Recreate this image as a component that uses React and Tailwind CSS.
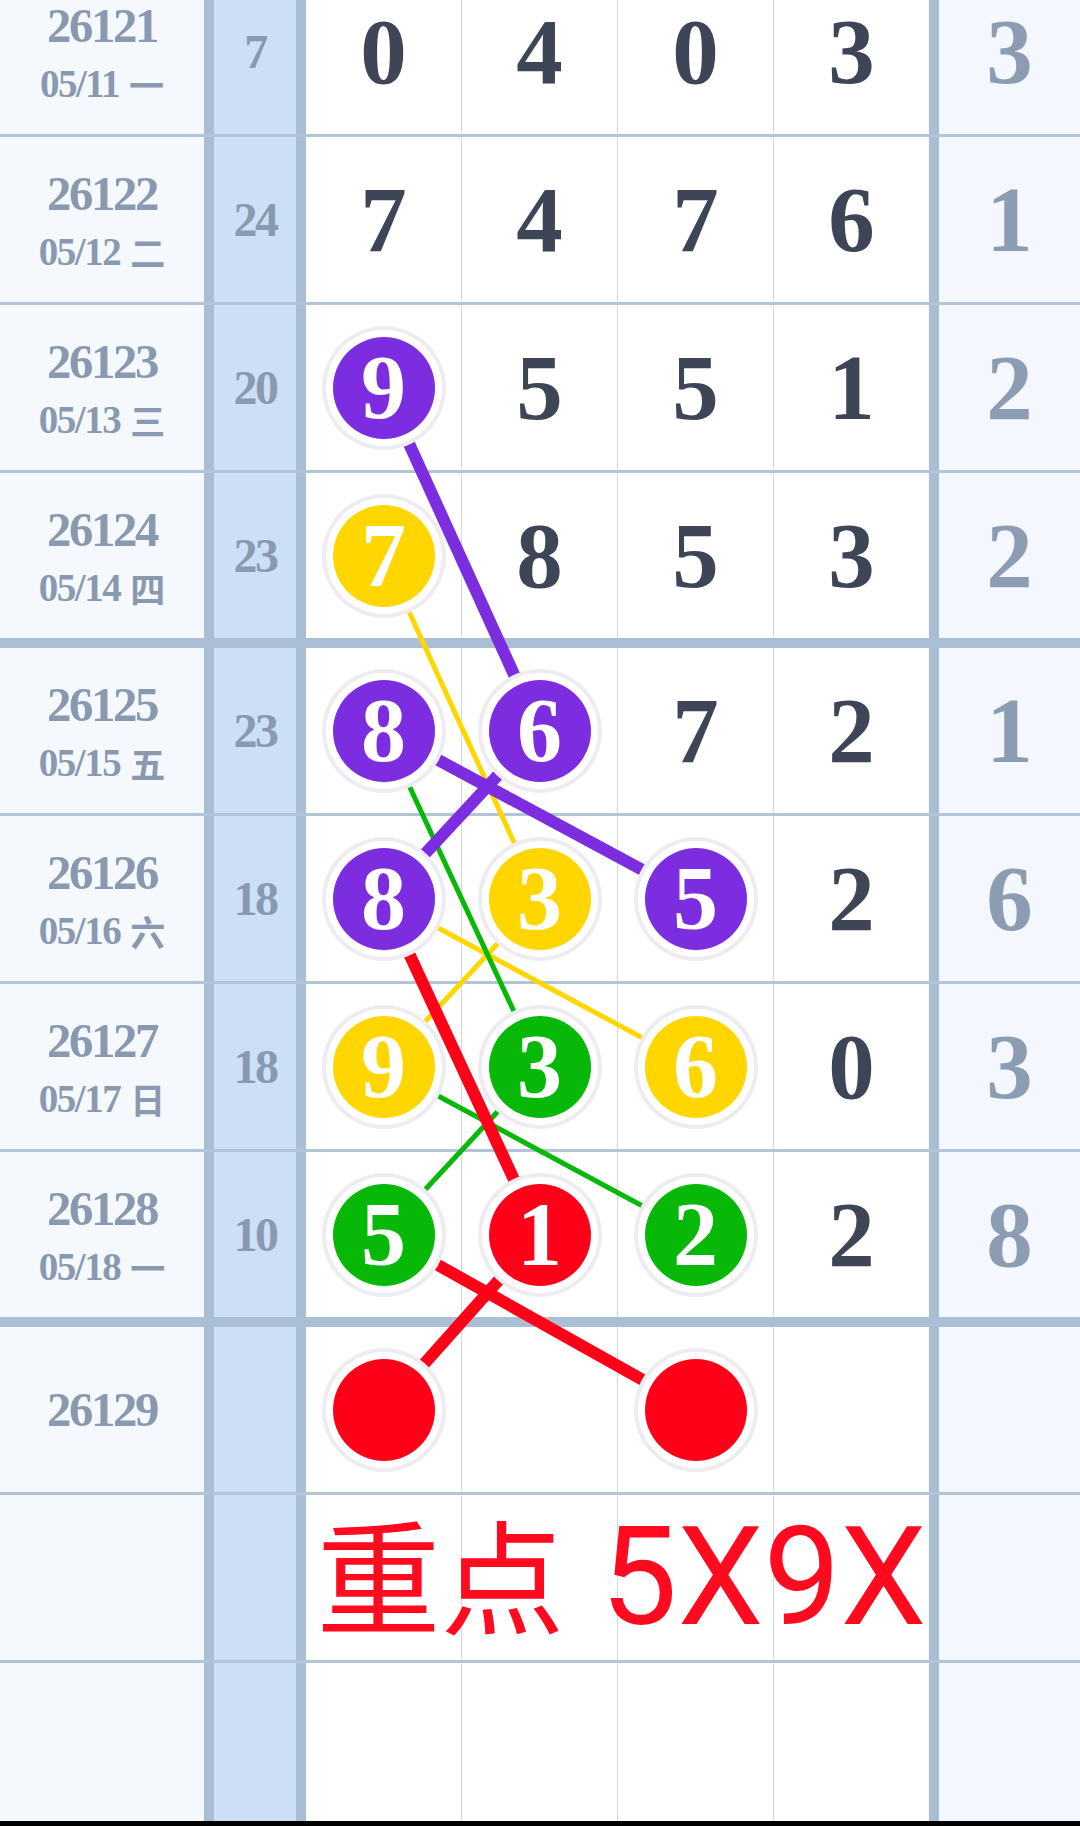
import React from "react";

const BALL_BG = {
  p: "bg-[#7b2ddf]",
  y: "bg-[#ffd600]",
  g: "bg-[#08b808]",
  r: "bg-[#ff0019]",
};
const STROKE = { p: "#7b2ddf", y: "#ffd600", g: "#08b808", r: "#ff0019" };

const rows = [
  { issue: "26121", date: "05/11", wd: "一", sum: "7", d: ["0", "4", "0", "3"], r: "3" },
  { issue: "26122", date: "05/12", wd: "二", sum: "24", d: ["7", "4", "7", "6"], r: "1" },
  { issue: "26123", date: "05/13", wd: "三", sum: "20", d: [["p", "9"], "5", "5", "1"], r: "2" },
  { issue: "26124", date: "05/14", wd: "四", sum: "23", d: [["y", "7"], "8", "5", "3"], r: "2", thick: true },
  { issue: "26125", date: "05/15", wd: "五", sum: "23", d: [["p", "8"], ["p", "6"], "7", "2"], r: "1" },
  { issue: "26126", date: "05/16", wd: "六", sum: "18", d: [["p", "8"], ["y", "3"], ["p", "5"], "2"], r: "6" },
  { issue: "26127", date: "05/17", wd: "日", sum: "18", d: [["y", "9"], ["g", "3"], ["y", "6"], "0"], r: "3" },
  { issue: "26128", date: "05/18", wd: "一", sum: "10", d: [["g", "5"], ["r", "1"], ["g", "2"], "2"], r: "8", thick: true },
  { issue: "26129", sum: "", d: [["r", ""], "", ["r", ""], ""], r: "" },
  { issue: "", sum: "", d: ["", "", "", ""], r: "", note: true },
  { issue: "", sum: "", d: ["", "", "", ""], r: "", last: true },
];

const colX = [383.5, 539.5, 695.5, 851.5];
const rowY = [51.5, 219.5, 387.5, 555.5, 730.5, 898.5, 1066.5, 1234.5, 1409.5, 1577.5, 1745.5];

// [color, width, c1, r1, c2, r2]
const links = [
  ["y", 5, 0, 3, 1, 5],
  ["y", 5, 0, 5, 2, 6],
  ["y", 5, 1, 5, 0, 6],
  ["g", 5, 0, 4, 1, 6],
  ["g", 5, 0, 6, 2, 7],
  ["g", 5, 1, 6, 0, 7],
  ["p", 12, 0, 2, 1, 4],
  ["p", 12, 0, 4, 2, 5],
  ["p", 12, 1, 4, 0, 5],
  ["r", 12, 0, 5, 1, 7],
  ["r", 12, 0, 7, 2, 8],
  ["r", 12, 1, 7, 0, 8],
];

function Ball({ color, v }) {
  return (
    <div
      className={`relative z-[2] flex h-[102px] w-[102px] items-center justify-center rounded-full ${BALL_BG[color]} text-[90px] font-bold leading-none text-white shadow-[0_0_0_7px_#ffffff,0_0_0_11px_#efecf1]`}
    >
      {v}
    </div>
  );
}

function DataCell({ val, idx }) {
  const cls =
    idx < 3
      ? "flex w-[156px] items-center justify-center border-r border-[#d3d9e3]"
      : "flex w-[155px] items-center justify-center";
  return (
    <div className={cls}>
      {Array.isArray(val) ? (
        <Ball color={val[0]} v={val[1]} />
      ) : (
        <span className="text-[93px] font-bold leading-none text-[#3d4556]">{val}</span>
      )}
    </div>
  );
}

function Row({ row }) {
  return (
    <div className="flex h-[165px] shrink-0">
      <div className="flex w-[214px] flex-col items-center justify-center border-r-[10px] border-[#a9bdd4] bg-[#f5f8fd] text-[#8999af]">
        {row.issue && (
          <div className={row.date ? "flex flex-col items-center pt-[7px]" : "flex flex-col items-center"}>
            <div className="text-[49px] font-bold leading-[58px] tracking-[-2.5px]">{row.issue}</div>
            {row.date && (
              <div className="flex items-center text-[39px] font-bold leading-[58px]">
                <span className="tracking-[-1.5px]">{row.date}</span>
                <span className="ml-[10px] font-['Noto_Sans_CJK_SC',sans-serif] text-[35px] font-bold leading-[58px]">
                  {row.wd}
                </span>
              </div>
            )}
          </div>
        )}
      </div>
      <div className="flex w-[92px] items-center justify-center border-r-[10px] border-[#a9bdd4] bg-[#cddff6]">
        <span className="text-[48px] font-bold leading-none tracking-[-2.5px] text-[#8999af]">{row.sum}</span>
      </div>
      <div className="relative flex w-[633px] border-r-[10px] border-[#a9bdd4] bg-white">
        {row.d.map((v, i) => (
          <DataCell key={i} val={v} idx={i} />
        ))}
        {row.note && (
          <div className="absolute inset-0 z-[2] flex items-center justify-center pl-[8px] text-[#ff0a1e]">
            <span className="mt-[-14px] font-['Noto_Sans_CJK_SC',sans-serif] text-[124px] font-normal leading-none">重点</span>
            <span className="ml-[36px] font-['Roboto','Noto_Sans_CJK_SC',sans-serif] text-[137px] font-normal leading-none">
              5X9X
            </span>
          </div>
        )}
      </div>
      <div className="flex w-[141px] items-center justify-center bg-[#f4f7fd]">
        <span className="text-[93px] font-bold leading-none text-[#8c9db3]">{row.r}</span>
      </div>
    </div>
  );
}

export default function App() {
  return (
    <div className="relative flex h-[1826px] w-[1080px] flex-col overflow-hidden bg-white font-['Liberation_Serif','Noto_Serif_CJK_SC','Noto_Sans_CJK_SC',serif]">
      <div className="min-h-0 flex-1 overflow-hidden">
        <div className="mt-[-31px] flex flex-col">
          {rows.map((row, i) => (
            <React.Fragment key={i}>
              <Row row={row} />
              {!row.last &&
                (row.thick ? (
                  <div className="h-[10px] shrink-0 bg-[#aabed5]" />
                ) : (
                  <div className="h-[3px] shrink-0 bg-[#b3c3d8]" />
                ))}
            </React.Fragment>
          ))}
        </div>
      </div>
      <div className="h-[5px] shrink-0 bg-black" />
      <svg
        className="pointer-events-none absolute left-0 top-0 z-[1]"
        width="1080"
        height="1826"
        viewBox="0 0 1080 1826"
      >
        {links.map(([c, w, c1, r1, c2, r2], i) => (
          <line
            key={i}
            x1={colX[c1]}
            y1={rowY[r1]}
            x2={colX[c2]}
            y2={rowY[r2]}
            stroke={STROKE[c]}
            strokeWidth={w}
          />
        ))}
      </svg>
    </div>
  );
}
